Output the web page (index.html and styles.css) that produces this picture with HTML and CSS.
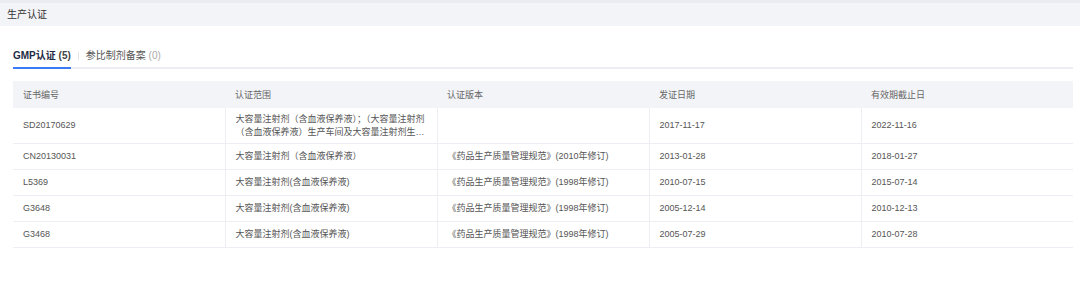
FILE: index.html
```html
<!DOCTYPE html>
<html lang="zh-CN">
<head>
    <meta charset="UTF-8">
    <title>生产认证</title>
    <link rel="stylesheet" href="styles.css">
</head>
<body>
    <div class="panel">
        <div class="panel-title">生产认证</div>

        <div class="panel-body">
            <div class="tabs">
                <div class="tab active">GMP认证 <span class="count">(5)</span></div>
                <span class="tab-sep"></span>
                <div class="tab">参比制剂备案 <span class="count muted">(0)</span></div>
            </div>

            <table class="cert-table">
                <thead>
                    <tr>
                        <th>证书编号</th>
                        <th>认证范围</th>
                        <th>认证版本</th>
                        <th>发证日期</th>
                        <th>有效期截止日</th>
                    </tr>
                </thead>
                <tbody>
                    <tr class="tall">
                        <td>SD20170629</td>
                        <td><div class="clamp">大容量注射剂（含血液保养液）；（大容量注射剂（含血液保养液）生产车间及大容量注射剂生产线）</div></td>
                        <td></td>
                        <td>2017-11-17</td>
                        <td>2022-11-16</td>
                    </tr>
                    <tr>
                        <td>CN20130031</td>
                        <td>大容量注射剂（含血液保养液）</td>
                        <td>《药品生产质量管理规范》(2010年修订)</td>
                        <td>2013-01-28</td>
                        <td>2018-01-27</td>
                    </tr>
                    <tr>
                        <td>L5369</td>
                        <td>大容量注射剂(含血液保养液)</td>
                        <td>《药品生产质量管理规范》(1998年修订)</td>
                        <td>2010-07-15</td>
                        <td>2015-07-14</td>
                    </tr>
                    <tr>
                        <td>G3648</td>
                        <td>大容量注射剂(含血液保养液)</td>
                        <td>《药品生产质量管理规范》(1998年修订)</td>
                        <td>2005-12-14</td>
                        <td>2010-12-13</td>
                    </tr>
                    <tr>
                        <td>G3468</td>
                        <td>大容量注射剂(含血液保养液)</td>
                        <td>《药品生产质量管理规范》(1998年修订)</td>
                        <td>2005-07-29</td>
                        <td>2010-07-28</td>
                    </tr>
                </tbody>
            </table>
        </div>
    </div>
</body>
</html>
```

FILE: styles.css
```css
:root {
    --line: #eceef3;
    --head-bg: #f3f4f8;
    --blue: #3b7bf6;
    --text: #555;
}

body {
    margin: 0;
    background: #fff;
    font-family: 'Liberation Sans', 'Noto Sans CJK SC', sans-serif;
    color: var(--text);
}

.panel {
    border-top: 3px solid #eaecf1;
}

.panel-title {
    height: 23px;
    line-height: 23px;
    padding-left: 7px;
    background: var(--head-bg);
    font-size: 10px;
    color: #333;
}

.panel-body {
    padding: 21px 7px 0 13px;
}

.tabs {
    display: flex;
    align-items: center;
    border-bottom: 2px solid var(--line);
}

.tab {
    font-size: 10px;
    line-height: 18px;
    padding-bottom: 2px;
    border-bottom: 2px solid transparent;
    margin-bottom: -2px;
    color: #555;
}

.tab.active {
    font-weight: bold;
    color: #1f2a44;
    border-bottom-color: var(--blue);
}

.tab.active .count {
    color: #444;
}

.count.muted {
    color: #aaa;
}

.tab-sep {
    width: 1px;
    height: 8px;
    margin: 0 7px 2px;
    background: #e3e5ea;
}

.cert-table {
    width: 1060px;
    margin-top: 12px;
    border-collapse: collapse;
    table-layout: fixed;
    font-size: 9px;
}

.cert-table th {
    height: 27px;
    padding: 0 10px;
    background: var(--head-bg);
    text-align: left;
    font-weight: normal;
    color: #666;
}

.cert-table td {
    height: 25px;
    padding: 0 4px 0 10px;
    border-bottom: 1px solid var(--line);
    border-left: 1px solid var(--line);
    line-height: 13px;
    vertical-align: middle;
}

.cert-table td:first-child {
    border-left: none;
}

.cert-table tr.tall td {
    height: 35px;
}

.clamp {
    display: -webkit-box;
    -webkit-line-clamp: 2;
    -webkit-box-orient: vertical;
    overflow: hidden;
}
```
